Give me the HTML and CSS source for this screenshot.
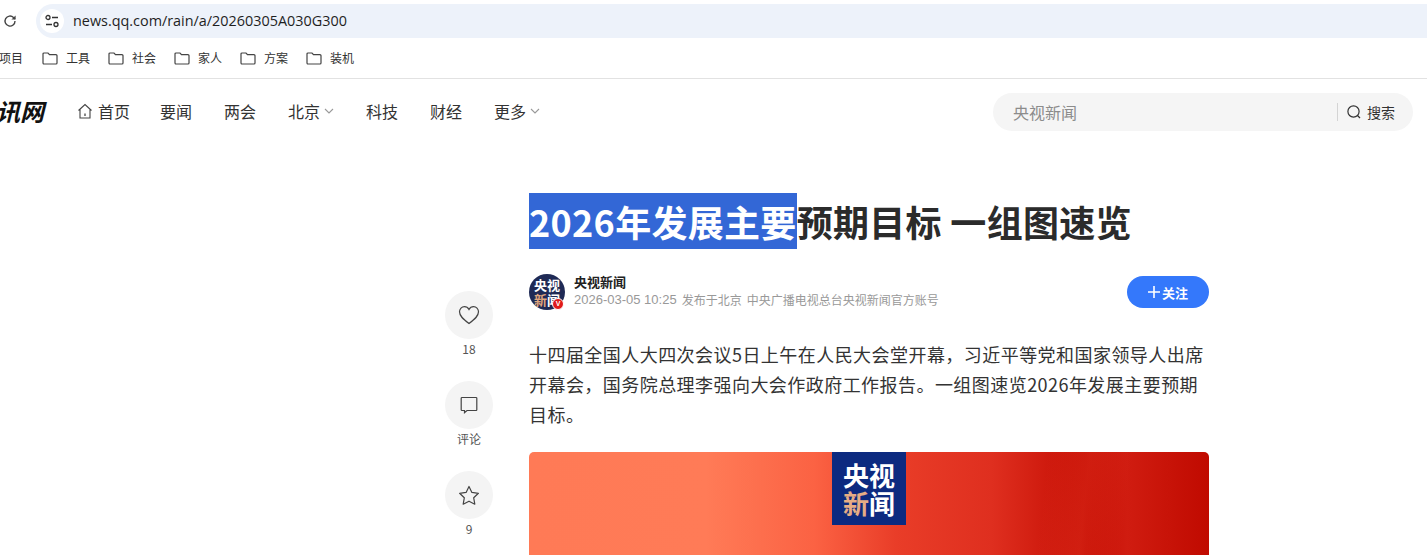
FILE: index.html
```html
<!DOCTYPE html>
<html lang="zh-CN">
<head>
<meta charset="utf-8">
<title>2026年发展主要预期目标 一组图速览</title>
<link rel="stylesheet" href="styles.css">
</head>
<body>
<div class="toolbar">
  <svg class="reload" width="16" height="16" viewBox="0 0 16 16"><path d="M13 8a5 5 0 1 1-1.5-3.5L13 6" fill="none" stroke="#444" stroke-width="1.4"/><path d="M13.6 2.4v4.2H9.4z" fill="#444"/></svg>
  <div class="address">
    <span class="site-info"><svg width="16" height="14" viewBox="0 0 16 14"><circle cx="4" cy="3.5" r="2" fill="none" stroke="#333" stroke-width="1.3"/><path d="M8 3.5h6M2 10.5h6" stroke="#333" stroke-width="1.3"/><circle cx="12" cy="10.5" r="2" fill="none" stroke="#333" stroke-width="1.3"/></svg></span>
    <span class="url">news.qq.com/rain/a/20260305A030G300</span>
  </div>
</div>
<div class="bookmarks">
  <span class="bm bm-cut">项目</span>
  <span class="bm"><svg class="folder" width="16" height="14" viewBox="0 0 16 14"><path d="M1 3a1 1 0 0 1 1-1h4l1.5 1.7H14a1 1 0 0 1 1 1V12a1 1 0 0 1-1 1H2a1 1 0 0 1-1-1z" fill="none" stroke="#444" stroke-width="1.2"/></svg>工具</span>
  <span class="bm"><svg class="folder" width="16" height="14" viewBox="0 0 16 14"><path d="M1 3a1 1 0 0 1 1-1h4l1.5 1.7H14a1 1 0 0 1 1 1V12a1 1 0 0 1-1 1H2a1 1 0 0 1-1-1z" fill="none" stroke="#444" stroke-width="1.2"/></svg>社会</span>
  <span class="bm"><svg class="folder" width="16" height="14" viewBox="0 0 16 14"><path d="M1 3a1 1 0 0 1 1-1h4l1.5 1.7H14a1 1 0 0 1 1 1V12a1 1 0 0 1-1 1H2a1 1 0 0 1-1-1z" fill="none" stroke="#444" stroke-width="1.2"/></svg>家人</span>
  <span class="bm"><svg class="folder" width="16" height="14" viewBox="0 0 16 14"><path d="M1 3a1 1 0 0 1 1-1h4l1.5 1.7H14a1 1 0 0 1 1 1V12a1 1 0 0 1-1 1H2a1 1 0 0 1-1-1z" fill="none" stroke="#444" stroke-width="1.2"/></svg>方案</span>
  <span class="bm"><svg class="folder" width="16" height="14" viewBox="0 0 16 14"><path d="M1 3a1 1 0 0 1 1-1h4l1.5 1.7H14a1 1 0 0 1 1 1V12a1 1 0 0 1-1 1H2a1 1 0 0 1-1-1z" fill="none" stroke="#444" stroke-width="1.2"/></svg>装机</span>
</div>
<header class="nav">
  <span class="logo">讯网</span>
  <nav class="menu">
    <a class="item item-home"><svg width="16" height="17" viewBox="0 0 16 17"><path d="M1.5 7.5 8 1.6l6.5 5.9M3 6.5V15h10V6.5" fill="none" stroke="#444" stroke-width="1.1"/><path d="M8 10.5v2.5" stroke="#444" stroke-width="1.3"/></svg>首页</a>
    <a class="item">要闻</a>
    <a class="item">两会</a>
    <a class="item">北京<svg class="chev" width="10" height="6" viewBox="0 0 10 6"><path d="M1 1l4 4 4-4" fill="none" stroke="#999" stroke-width="1.1"/></svg></a>
    <a class="item">科技</a>
    <a class="item">财经</a>
    <a class="item">更多<svg class="chev" width="10" height="6" viewBox="0 0 10 6"><path d="M1 1l4 4 4-4" fill="none" stroke="#999" stroke-width="1.1"/></svg></a>
  </nav>
  <div class="search">
    <span class="search-term">央视新闻</span>
    <span class="search-btn"><svg width="16" height="16" viewBox="0 0 16 16"><circle cx="7.5" cy="7.5" r="5.6" fill="none" stroke="#333" stroke-width="1.2"/><path d="M11.5 11.5l2.5 2.5" stroke="#333" stroke-width="1.2"/></svg>搜索</span>
  </div>
</header>
<main class="layout">
  <aside class="rail">
    <div class="action">
      <span class="circle"><svg width="22" height="20" viewBox="0 0 22 20"><path d="M11 18.500C5 14 1.500 11 1.500 6.800 1.500 3.800 3.800 1.600 6.400 1.600c1.900 0 3.600 1 4.600 2.800 1-1.800 2.700-2.800 4.600-2.800 2.600 0 4.900 2.200 4.900 5.200 0 4.200-3.500 7.200-9.500 11.700z" fill="none" stroke="#444" stroke-width="1.2"/></svg></span>
      <span class="label">18</span>
    </div>
    <div class="action">
      <span class="circle"><svg width="20" height="20" viewBox="0 0 20 20"><path d="M3 2.500h14a.8.8 0 0 1 .8.8v11.400a.8.8 0 0 1-.8.8H8l-2.500 2.200v-2.200H3a.8.8 0 0 1-.8-.8V3.300a.8.8 0 0 1 .8-.8z" fill="none" stroke="#444" stroke-width="1.2"/></svg></span>
      <span class="label">评论</span>
    </div>
    <div class="action">
      <span class="circle"><svg width="22" height="20" viewBox="0 0 22 20"><path d="M11 1.500l2.900 5.900 6.500.9-4.700 4.500 1.100 6.400-5.800-3-5.800 3 1.100-6.400L1.600 8.300l6.500-.9z" fill="none" stroke="#444" stroke-width="1.2" stroke-linejoin="round"/></svg></span>
      <span class="label">9</span>
    </div>
  </aside>
  <article class="article">
    <h1 class="title"><span class="selected">2026年发展主要</span>预期目标 一组图速览</h1>
    <div class="author">
      <div class="avatar">
        <span class="avatar-text">央视<br><em class="avatar-accent">新</em>闻</span>
        <span class="badge">V</span>
      </div>
      <div class="author-info">
        <div class="author-name">央视新闻</div>
        <div class="author-meta"><span class="author-date">2026-03-05 10:25</span><span>发布于北京</span><span>中央广播电视总台央视新闻官方账号</span></div>
      </div>
      <button class="follow"><svg width="12" height="12" viewBox="0 0 12 12"><path d="M6 0v12M0 6h12" stroke="#fff" stroke-width="1.6"/></svg>关注</button>
    </div>
    <p class="lead">十四届全国人大四次会议5日上午在人民大会堂开幕，习近平等党和国家领导人出席开幕会，国务院总理李强向大会作政府工作报告。一组图速览2026年发展主要预期目标。</p>
    <div class="hero">
      <div class="hero-logo">央视<br><em class="hero-accent">新</em>闻</div>
    </div>
  </article>
</main>
</body>
</html>
```
FILE: styles.css
```css
* { box-sizing: border-box; }
html, body { margin: 0; height: 555px; overflow: hidden; background: #fff; }
body { font-family: "Noto Sans CJK SC", "Liberation Sans", sans-serif; color: #222; }

.toolbar { height: 42px; display: flex; align-items: center; padding: 0 0 0 2px; }
.reload { margin-right: 18px; flex: none; }
.address { flex: 1; height: 34px; background: #edf2fa; border-radius: 17px 0 0 17px; display: flex; align-items: center; padding-left: 4px; }
.site-info { width: 24px; height: 24px; border-radius: 50%; background: #fff; display: flex; align-items: center; justify-content: center; margin-right: 9px; }
.url { font: 14.4px "Open Sans", "Liberation Sans", sans-serif; color: #1f1f1f; padding-bottom: 2px; }

.bookmarks { height: 37px; display: flex; align-items: center; border-bottom: 1px solid #e2e2e2; font-size: 12px; color: #333; padding-bottom: 5px; }
.bm { width: 66px; display: flex; align-items: center; flex: none; }
.bm-cut { width: 43px; margin-left: -1px; }
.folder { margin-right: 8px; flex: none; }

.nav { height: 68px; display: flex; align-items: center; padding-bottom: 2px; }
.logo { font-size: 24px; font-weight: 700; font-style: italic; color: #111; margin: 0 0 2px -4px; width: 81px; flex: none; line-height: 1; }
.menu { display: flex; align-items: center; font-size: 16px; color: #333; flex: none; margin-bottom: 2px; }
.item { display: flex; align-items: center; margin-right: 32px; }
.item-home { margin-right: 30px; }
.item-home svg { margin-right: 5px; }
.chev { margin-left: 4px; }
.search { margin-left: auto; margin-right: 14px; width: 420px; height: 38px; border-radius: 19px; background: #f5f5f5; display: flex; align-items: center; justify-content: space-between; padding: 0 18px 0 20px; }
.search-term { font-size: 16px; color: #8c8c8c; }
.search-btn { display: flex; align-items: center; gap: 5px; font-size: 14px; color: #333; border-left: 1px solid #d4d4d4; padding-left: 8px; height: 18px; }

.layout { display: flex; padding-left: 445px; }
.rail { width: 48px; margin-right: 36px; padding-top: 144px; display: flex; flex-direction: column; gap: 24px; flex: none; }
.action { display: flex; flex-direction: column; align-items: center; gap: 1px; }
.circle { width: 48px; height: 48px; border-radius: 50%; background: #f4f4f4; display: flex; align-items: center; justify-content: center; }
.label { font-size: 12px; line-height: 17px; color: #555; }

.article { width: 680px; padding-top: 46px; }
.title { margin: 0; font-size: 36px; line-height: 56px; font-weight: 700; color: #2b2b2b; white-space: nowrap; letter-spacing: 0.3px; }
.selected { background: #3367d6; color: #fff; display: inline-block; }
.author { display: flex; align-items: center; margin-top: 25px; height: 36px; }
.avatar { width: 36px; height: 36px; border-radius: 50%; background: #1f2a55; position: relative; display: flex; align-items: center; justify-content: center; margin-right: 10px; flex: none; }
.avatar-text { font-size: 13px; line-height: 15px; font-weight: 700; color: #fff; text-align: center; }
.avatar-accent { font-style: normal; color: #e0a77e; }
.badge { position: absolute; right: 1px; bottom: 0; width: 12px; height: 12px; border-radius: 50%; background: #e01a1a; border: 1px solid #fff; color: #fff; font: 700 7px/10px "Liberation Sans", sans-serif; text-align: center; }
.author-info { flex: 1; padding-bottom: 4px; margin-left: -1px; }
.author-name { font-size: 13px; line-height: 19px; font-weight: 700; color: #222; }
.author-meta { font-size: 12px; line-height: 17px; color: #999; display: flex; gap: 5px; }
.author-date { font: 13px/17px "Liberation Sans", sans-serif; }
.follow { width: 82px; height: 32px; border: 0; border-radius: 16px; background: #3478fb; color: #fff; font: 700 13px "Noto Sans CJK SC", sans-serif; display: flex; align-items: center; justify-content: center; gap: 2px; padding: 0; }
.lead { margin: 29px 0 0; font-size: 18px; line-height: 30px; color: #333; letter-spacing: 0.45px; }
.hero { margin-top: 23px; height: 200px; border-radius: 5px 5px 0 0; background: linear-gradient(96deg, rgba(255,255,255,0) 74%, rgba(230,60,40,.35) 80%, rgba(255,255,255,0) 86%), linear-gradient(90deg, #ff7a56 0%, #ff7b57 26%, #fb6243 42%, #e93d28 54%, #df2f1f 68%, #c40c02 82%, #d01c10 88%, #c00a00 100%); display: flex; justify-content: center; }
.hero-logo { width: 74px; height: 73px; background: #0c2a80; color: #fff; font-size: 26px; line-height: 28px; font-weight: 700; text-align: center; padding-top: 9px; }
.hero-accent { font-style: normal; color: #e6ad85; }
```
